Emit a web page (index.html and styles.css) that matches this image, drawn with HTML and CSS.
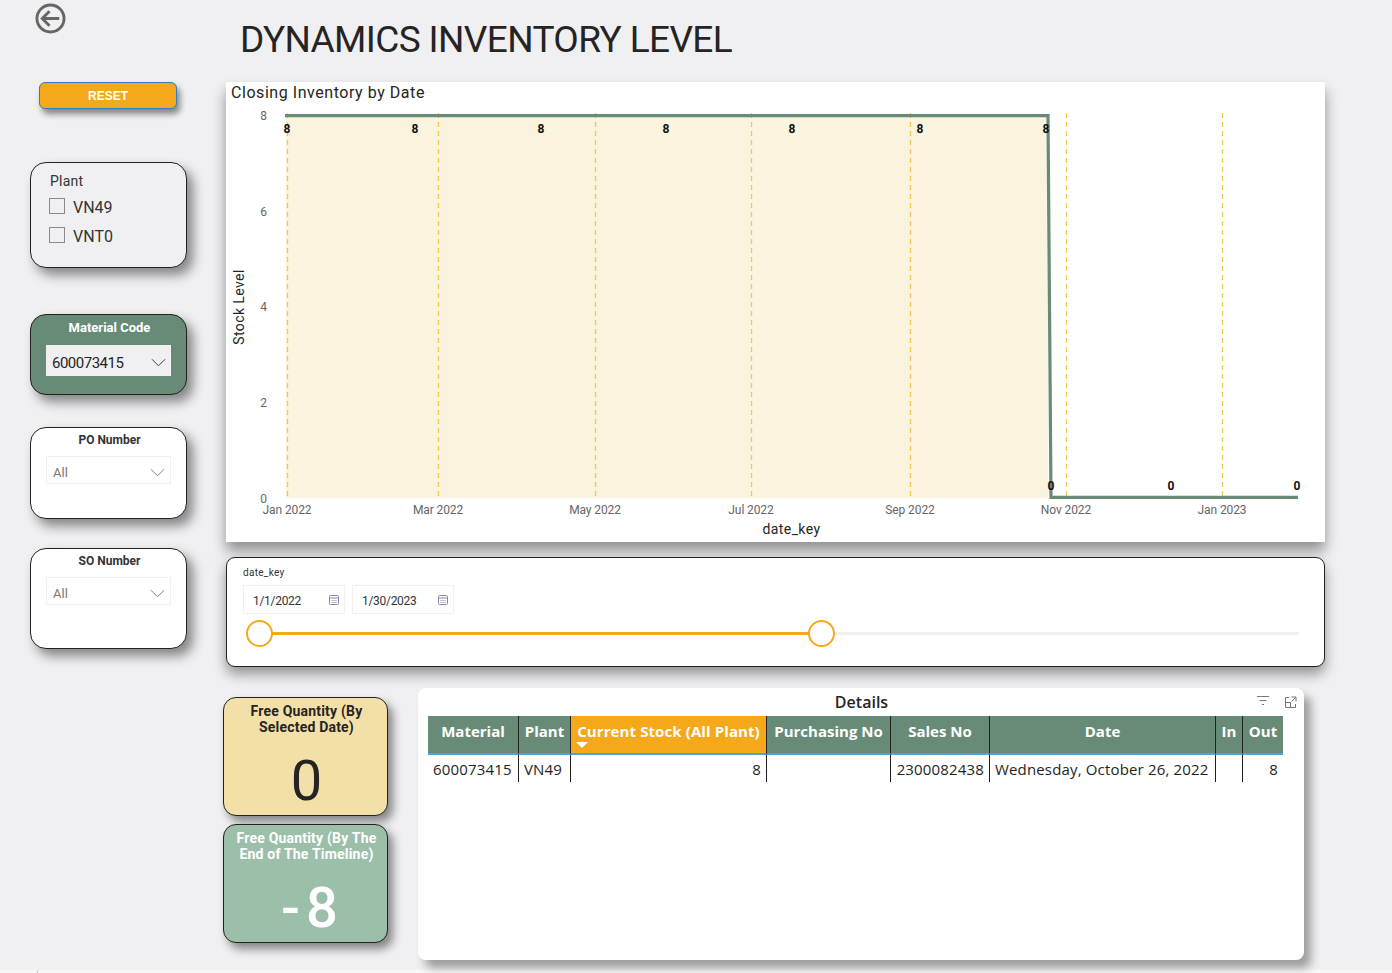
FILE: index.html
```html
<!DOCTYPE html>
<html lang="en">
<head>
  <meta charset="UTF-8">
  <title>Dynamics Inventory Level</title>
  <link rel="stylesheet" href="styles.css">
</head>
<body>
  <header class="top">
    <svg class="back" viewBox="0 0 32 32" width="31" height="31">
      <circle cx="16" cy="16" r="14" fill="none" stroke="#666" stroke-width="3"/>
      <path d="M25 16H8M15 8.5 7.5 16l7.5 7.5" fill="none" stroke="#666" stroke-width="3"/>
    </svg>
    <h1>DYNAMICS INVENTORY LEVEL</h1>
  </header>

  <div class="content">
    <aside class="sidebar">
      <button class="reset">RESET</button>

      <div class="box plant">
        <div class="plant-title">Plant</div>
        <label class="check"><span class="checkbox"></span>VN49</label>
        <label class="check"><span class="checkbox"></span>VNT0</label>
      </div>

      <div class="box material">
        <div class="box-title">Material Code</div>
        <div class="select select-solid">
          <span>600073415</span>
          <svg viewBox="0 0 16 9" width="15" height="9"><path d="M1 1l7 7 7-7" fill="none" stroke="#333"/></svg>
        </div>
      </div>

      <div class="box po">
        <div class="box-title dark">PO Number</div>
        <div class="select">
          <span>All</span>
          <svg viewBox="0 0 16 9" width="15" height="9"><path d="M1 1l7 7 7-7" fill="none" stroke="#777"/></svg>
        </div>
      </div>

      <div class="box so">
        <div class="box-title dark">SO Number</div>
        <div class="select">
          <span>All</span>
          <svg viewBox="0 0 16 9" width="15" height="9"><path d="M1 1l7 7 7-7" fill="none" stroke="#777"/></svg>
        </div>
      </div>
    </aside>

    <main class="main">
      <section class="chart">
        <svg viewBox="226 82 1099 460" width="1099" height="460">
          <text class="chart-title" x="231" y="98">Closing Inventory by Date</text>

          <rect x="286" y="116" width="762" height="382" fill="#faf3de"/>
          <g class="grid">
            <path d="M287.500 113V498M438.500 113V498M595.500 113V498M751.500 113V498M910.500 113V498M1066.500 113V498M1222.500 113V498"/>
          </g>
          <path class="line" d="M285 115.700H1048L1051 497.400H1298"/>

          <g class="tick" text-anchor="middle">
            <text x="263.500" y="120">8</text>
            <text x="263.500" y="216">6</text>
            <text x="263.500" y="311">4</text>
            <text x="263.500" y="407">2</text>
            <text x="263.500" y="503">0</text>
            <text x="287" y="514">Jan 2022</text>
            <text x="438" y="514">Mar 2022</text>
            <text x="595" y="514">May 2022</text>
            <text x="751" y="514">Jul 2022</text>
            <text x="910" y="514">Sep 2022</text>
            <text x="1066" y="514">Nov 2022</text>
            <text x="1222" y="514">Jan 2023</text>
          </g>

          <g class="point" text-anchor="middle">
            <text x="287" y="133">8</text>
            <text x="415" y="133">8</text>
            <text x="541" y="133">8</text>
            <text x="666" y="133">8</text>
            <text x="792" y="133">8</text>
            <text x="920" y="133">8</text>
            <text x="1046" y="133">8</text>
            <text x="1051" y="490">0</text>
            <text x="1171" y="490">0</text>
            <text x="1297" y="490">0</text>
          </g>

          <text class="axis" x="791.500" y="534" text-anchor="middle">date_key</text>
          <text class="axis" text-anchor="middle" transform="translate(244 307) rotate(-90)">Stock Level</text>
        </svg>
      </section>

      <section class="range">
        <div class="range-label">date_key</div>
        <div class="range-dates">
          <div class="date">
            <span>1/1/2022</span>
            <svg viewBox="0 0 10 10" width="10" height="10"><rect x=".5" y=".5" width="9" height="9" rx="1" fill="none" stroke="#8b86a8"/><path d="M1 3h8" stroke="#8b86a8"/><path d="M2.500 5.500h5M2.500 7.500h5" stroke="#8b86a8" stroke-dasharray="1 1"/></svg>
          </div>
          <div class="date">
            <span>1/30/2023</span>
            <svg viewBox="0 0 10 10" width="10" height="10"><rect x=".5" y=".5" width="9" height="9" rx="1" fill="none" stroke="#8b86a8"/><path d="M1 3h8" stroke="#8b86a8"/><path d="M2.500 5.500h5M2.500 7.500h5" stroke="#8b86a8" stroke-dasharray="1 1"/></svg>
          </div>
        </div>
        <div class="slider">
          <div class="slider-fill"></div>
          <span class="knob knob-start"></span>
          <span class="knob knob-end"></span>
        </div>
      </section>

      <div class="bottom">
        <div class="cards">
          <div class="card card-beige">
            <div class="card-title">Free Quantity (By Selected Date)</div>
            <div class="card-value">0</div>
          </div>
          <div class="card card-green">
            <div class="card-title">Free Quantity (By The End of The Timeline)</div>
            <div class="card-value card-minus">-8</div>
          </div>
        </div>

        <section class="details">
          <h2>Details</h2>
          <svg class="icon-filter" viewBox="0 0 12 10" width="12" height="10"><path d="M0 .5h12M2.500 4.500h7M5 8.500h2" stroke="#777"/></svg>
          <svg class="icon-expand" viewBox="0 0 13 13" width="13" height="13"><path d="M5 1.500H1.500V11.500H11.500V8M7.500 1h4.500v4.500M12 1 7.500 5.500M1.500 6.500h5v5" fill="none" stroke="#777"/></svg>
          <table>
            <colgroup>
              <col class="c-material"><col class="c-plant"><col class="c-stock"><col class="c-po">
              <col class="c-sales"><col class="c-date"><col class="c-in"><col class="c-out">
            </colgroup>
            <thead>
              <tr>
                <th>Material</th>
                <th>Plant</th>
                <th class="sorted">Current Stock (All Plant)<i class="sort"></i></th>
                <th>Purchasing No</th>
                <th>Sales No</th>
                <th>Date</th>
                <th>In</th>
                <th>Out</th>
              </tr>
            </thead>
            <tbody>
              <tr>
                <td>600073415</td>
                <td>VN49</td>
                <td class="num">8</td>
                <td></td>
                <td class="num">2300082438</td>
                <td>Wednesday, October 26, 2022</td>
                <td></td>
                <td class="num">8</td>
              </tr>
            </tbody>
          </table>
        </section>
      </div>
    </main>
  </div>

  <div class="strip"><span class="strip-tick"></span></div>
</body>
</html>
```

FILE: styles.css
```css
* {
  box-sizing: border-box;
}

body {
  margin: 0;
  height: 973px;
  overflow: hidden;
  background-color: #f0f0f3;
  color: #252423;
  font-family: Roboto, sans-serif;
}

.top {
  display: flex;
  height: 82px;
  padding-left: 35px;
}

.back {
  margin-top: 3px;
}

h1 {
  margin: 17px 0 0 174px;
  font-size: 37px;
  line-height: 46px;
  font-weight: 400;
  letter-spacing: -0.62px;
  color: #252423;
}

.content {
  display: flex;
  padding-left: 30px;
}

.strip {
  height: 3px;
  margin-top: 10px;
  padding-left: 37px;
  background-color: #f7f7f7;
}

.strip-tick {
  display: block;
  width: 1px;
  height: 3px;
  background-color: #c8c8c8;
}

/* left column */
.sidebar {
  display: flex;
  flex-direction: column;
  width: 157px;
  margin-right: 39px;
}

.reset {
  width: 138px;
  height: 27px;
  margin: 0 0 53px 9px;
  padding: 0;
  background-color: #f4a81a;
  border: 1px solid #2f7fc1;
  border-radius: 6px;
  box-shadow: 3px 5px 6px rgba(0, 0, 0, 0.45);
  color: white;
  font-family: "Liberation Sans", sans-serif;
  font-size: 12px;
  font-weight: bold;
}

.box {
  border: 1px solid #222;
  border-radius: 16px;
  box-shadow: 6px 7px 12px rgba(0, 0, 0, 0.45);
}

.plant {
  height: 106px;
  padding: 10px 0 0 19px;
  margin-bottom: 46px;
  background-color: #f0f0f3;
}

.plant-title {
  font-size: 14px;
  line-height: 17px;
  letter-spacing: 0.2px;
  margin-bottom: 7px;
  color: #333;
}

.check {
  display: flex;
  align-items: center;
  height: 29px;
  margin-top: -4px;
  margin-bottom: 4px;
  margin-left: -1px;
  font-size: 16px;
  color: #333;
}

.checkbox {
  width: 16px;
  height: 16px;
  margin-right: 8px;
  margin-bottom: 3px;
  border: 1px solid #8a8a8a;
}

.material {
  height: 81px;
  margin-bottom: 32px;
  background-color: #688b78;
}

.po {
  height: 92px;
  margin-bottom: 29px;
  background-color: white;
}

.so {
  height: 101px;
  background-color: white;
}

.box-title {
  margin-top: 5px;
  padding-left: 2px;
  text-align: center;
  font-size: 13px;
  line-height: 15px;
  font-weight: 700;
  color: white;
}

.box-title.dark {
  font-size: 12px;
  color: #333;
}

.select {
  display: flex;
  justify-content: space-between;
  align-items: center;
  width: 125px;
  height: 28px;
  margin: 8px 0 0 15px;
  padding: 5px 5px 0 6px;
  border: 1px solid #f0f0f0;
  font-size: 13px;
  color: #777;
}

.select-solid {
  height: 31px;
  margin-top: 10px;
  padding-top: 4px;
  background-color: #f0f0f3;
  border: none;
  font-size: 15px;
  letter-spacing: -0.5px;
  color: #252423;
}

/* chart */
.main {
  width: 1099px;
}

.chart {
  height: 460px;
  margin-bottom: 15px;
  background-color: white;
  box-shadow: 0 9px 13px rgba(0, 0, 0, 0.4);
}

.chart svg {
  display: block;
}

.chart-title {
  font-size: 16px;
  letter-spacing: 0.55px;
  fill: #252423;
}

.grid path {
  stroke: #f2c94c;
  stroke-width: 1.3;
  stroke-dasharray: 5 4;
  fill: none;
}

.line {
  fill: none;
  stroke: #688b78;
  stroke-width: 3.2;
}

.tick {
  font-size: 12px;
  letter-spacing: -0.1px;
  fill: #666;
}

.point {
  font-size: 12px;
  font-weight: 700;
  fill: #111;
}

.axis {
  font-size: 14px;
  letter-spacing: 0.4px;
  fill: #252423;
}

/* date range */
.range {
  height: 110px;
  padding: 8px 16px 0;
  margin-bottom: 21px;
  background-color: white;
  border: 1px solid #222;
  border-radius: 9px;
  box-shadow: 0 7px 13px rgba(0, 0, 0, 0.4);
}

.range-label {
  font-size: 10px;
  line-height: 13px;
  letter-spacing: 0.3px;
  color: #333;
}

.range-dates {
  display: flex;
  gap: 7px;
  margin-top: 6px;
}

.date {
  display: flex;
  justify-content: space-between;
  align-items: center;
  width: 102px;
  height: 29px;
  padding: 0 5px 0 9px;
  border: 1px solid #f0f0f0;
  font-size: 12px;
  letter-spacing: -0.3px;
  color: #333;
}

.date span {
  padding-top: 2px;
}

.slider {
  position: relative;
  height: 3px;
  margin: 18px 9px 0 16px;
  background-color: #f0f0f0;
}

.slider-fill {
  width: 563px;
  height: 3px;
  background-color: #f4a81a;
}

.knob {
  position: absolute;
  top: -12px;
  width: 27px;
  height: 27px;
  background-color: white;
  border: 2px solid #f4a81a;
  border-radius: 50%;
}

.knob-start {
  left: -13px;
}

.knob-end {
  left: 549px;
}

/* bottom row */
.bottom {
  display: flex;
  align-items: flex-start;
}

.cards {
  display: flex;
  flex-direction: column;
  gap: 8px;
  width: 165px;
  margin: 9px 30px 0 -3px;
}

.card {
  height: 119px;
  padding: 5px 6px 0 8px;
  border: 1px solid #222;
  border-radius: 13px;
  box-shadow: 5px 6px 10px rgba(0, 0, 0, 0.45);
  text-align: center;
}

.card-beige {
  background-color: #f3e0a9;
  color: #252423;
}

.card-green {
  background-color: #9cbfaa;
  color: white;
}

.card-title {
  font-size: 14px;
  line-height: 16px;
  font-weight: 700;
  letter-spacing: 0.2px;
}

.card-value {
  margin-top: 14px;
  font-size: 56px;
  line-height: 64px;
}

.card-minus {
  padding-left: 12px;
  letter-spacing: 6px;
  font-weight: 500;
}

.details {
  position: relative;
  width: 886px;
  height: 272px;
  padding: 28px 10px 0;
  background-color: white;
  border-radius: 8px;
  box-shadow: 7px 8px 10px rgba(0, 0, 0, 0.35);
}

h2 {
  position: absolute;
  top: 4px;
  left: 1px;
  right: 0;
  margin: 0;
  text-align: center;
  font-family: "Open Sans", sans-serif;
  font-size: 16px;
  line-height: 21px;
  font-weight: 600;
  color: #252423;
}

.icon-filter {
  position: absolute;
  top: 8px;
  left: 839px;
}

.icon-expand {
  position: absolute;
  top: 8px;
  left: 866px;
}

table {
  width: 855px;
  table-layout: fixed;
  border-collapse: separate;
  border-spacing: 0;
  font-family: "Open Sans", sans-serif;
  font-size: 15px;
}

.c-material { width: 91px; }
.c-plant { width: 52px; }
.c-stock { width: 196px; }
.c-po { width: 124px; }
.c-sales { width: 99px; }
.c-date { width: 226px; }
.c-in { width: 27px; }
.c-out { width: 40px; }

th {
  position: relative;
  height: 39px;
  padding: 0 0 8px;
  background-color: #688b78;
  border-right: 1px solid #222;
  border-bottom: 2px solid #4aa3df;
  color: white;
  font-size: 15px;
  font-weight: 700;
  white-space: nowrap;
}

th:last-child,
td:last-child {
  border-right: none;
}

th.sorted {
  background-color: #f4a81a;
  letter-spacing: 0.1px;
}

.sort {
  position: absolute;
  left: 5px;
  top: 26px;
  border-left: 6px solid transparent;
  border-right: 6px solid transparent;
  border-top: 6px solid white;
}

td {
  height: 27px;
  padding: 0 5px;
  border-right: 1px solid #222;
  color: #252423;
  letter-spacing: 0.16px;
  white-space: nowrap;
}

td.num {
  text-align: right;
}
```
